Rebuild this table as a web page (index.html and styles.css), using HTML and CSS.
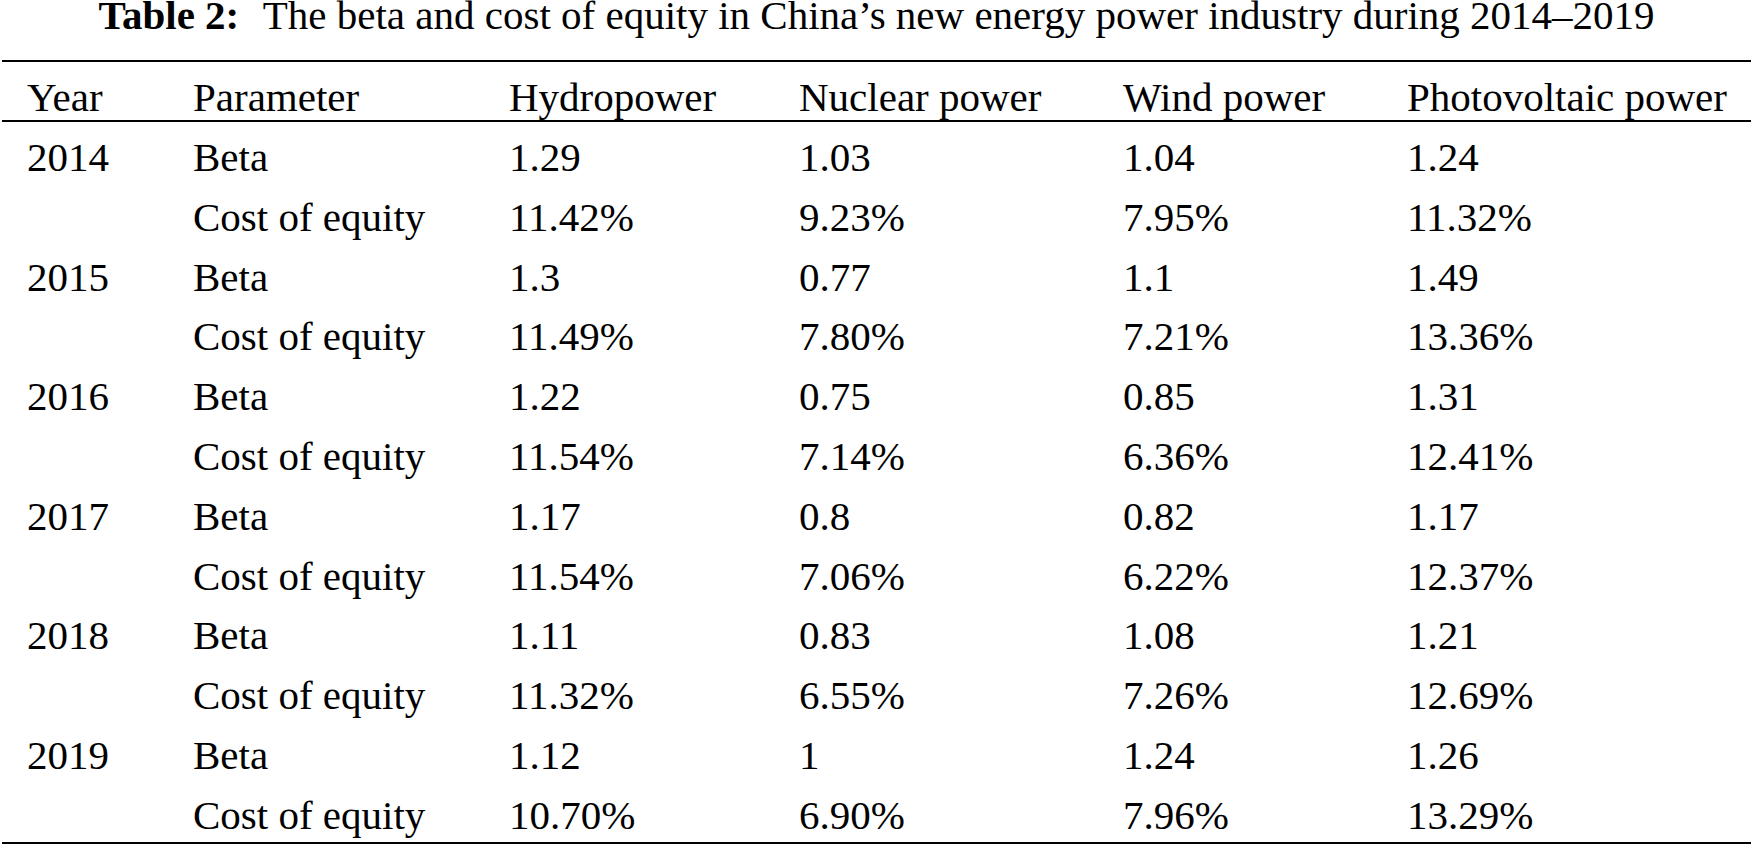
FILE: index.html
```html
<!DOCTYPE html>
<html lang="en">
<head>
<meta charset="utf-8">
<title>Table 2</title>
<link rel="stylesheet" href="styles.css">
</head>
<body>
<div class="caption"><span class="label">Table 2:</span> The beta and cost of equity in China’s new energy power industry during 2014–2019</div>
<table class="data">
  <colgroup>
    <col class="c1"><col class="c2"><col class="c3"><col class="c4"><col class="c5"><col class="c6">
  </colgroup>
  <thead>
    <tr><th>Year</th><th>Parameter</th><th>Hydropower</th><th>Nuclear power</th><th>Wind power</th><th>Photovoltaic power</th></tr>
  </thead>
  <tbody>
    <tr><td>2014</td><td>Beta</td><td>1.29</td><td>1.03</td><td>1.04</td><td>1.24</td></tr>
    <tr><td></td><td>Cost of equity</td><td>11.42%</td><td>9.23%</td><td>7.95%</td><td>11.32%</td></tr>
    <tr><td>2015</td><td>Beta</td><td>1.3</td><td>0.77</td><td>1.1</td><td>1.49</td></tr>
    <tr><td></td><td>Cost of equity</td><td>11.49%</td><td>7.80%</td><td>7.21%</td><td>13.36%</td></tr>
    <tr><td>2016</td><td>Beta</td><td>1.22</td><td>0.75</td><td>0.85</td><td>1.31</td></tr>
    <tr><td></td><td>Cost of equity</td><td>11.54%</td><td>7.14%</td><td>6.36%</td><td>12.41%</td></tr>
    <tr><td>2017</td><td>Beta</td><td>1.17</td><td>0.8</td><td>0.82</td><td>1.17</td></tr>
    <tr><td></td><td>Cost of equity</td><td>11.54%</td><td>7.06%</td><td>6.22%</td><td>12.37%</td></tr>
    <tr><td>2018</td><td>Beta</td><td>1.11</td><td>0.83</td><td>1.08</td><td>1.21</td></tr>
    <tr><td></td><td>Cost of equity</td><td>11.32%</td><td>6.55%</td><td>7.26%</td><td>12.69%</td></tr>
    <tr><td>2019</td><td>Beta</td><td>1.12</td><td>1</td><td>1.24</td><td>1.26</td></tr>
    <tr><td></td><td>Cost of equity</td><td>10.70%</td><td>6.90%</td><td>7.96%</td><td>13.29%</td></tr>
  </tbody>
</table>
</body>
</html>
```

FILE: styles.css
```css
html, body {
  margin: 0;
  padding: 0;
  background: #fff;
}
body {
  padding: 0 2px;
  font-family: "Liberation Serif", "Times New Roman", serif;
  font-size: 41px;
  color: #000;
}
.caption {
  text-align: center;
  line-height: 30px;
  height: 30px;
  margin-bottom: 30px;
  white-space: nowrap;
}
.caption .label {
  font-weight: bold;
  margin-right: 14px;
}
.data {
  width: 1749px;
  table-layout: fixed;
  border-collapse: collapse;
  border-top: 2px solid #000;
  border-bottom: 2px solid #000;
}
.c1 { width: 191px; }
.c2 { width: 316px; }
.c3 { width: 290px; }
.c4 { width: 324px; }
.c5 { width: 284px; }
.c6 { width: 344px; }
.data th,
.data td {
  padding: 0;
  text-align: left;
  font-weight: normal;
  white-space: nowrap;
  vertical-align: top;
}
.data th:first-child,
.data td:first-child {
  padding-left: 25px;
}
.data thead th {
  padding-top: 12px;
  line-height: 46px;
  border-bottom: 2px solid #000;
}
.data tbody td {
  padding-top: 8px;
  line-height: 51.8px;
}
.data tbody tr:first-child td {
  padding-top: 10px;
}
```
